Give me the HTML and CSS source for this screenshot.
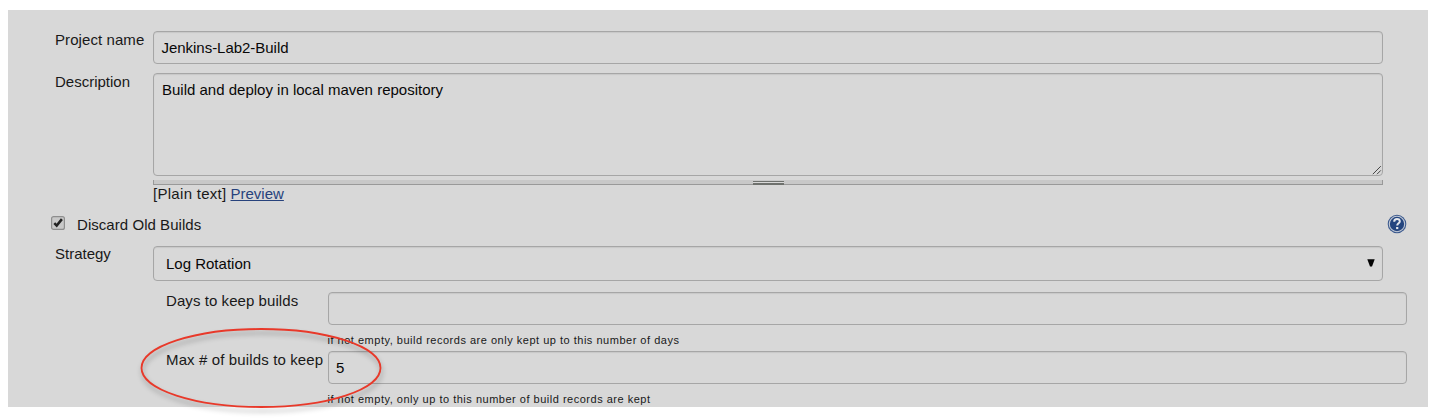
FILE: index.html
```
<!DOCTYPE html>
<html lang="en">
<head>
<meta charset="utf-8">
<title>Jenkins-Lab2-Build Config</title>
<link rel="stylesheet" href="styles.css">
</head>
<body>
<main class="panel">
  <div class="row name-row">
    <div class="label"><span class="t-name">Project name</span></div>
    <div class="field"><span class="t-value">Jenkins-Lab2-Build</span></div>
  </div>
  <div class="row desc-row">
    <div class="label"><span class="t-desc">Description</span></div>
    <div class="desc">
      <div class="field area"><span class="t-area">Build and deploy in local maven repository</span>
        <svg class="resizer" width="10" height="10" viewBox="0 0 10 10"><path d="M.8 9.2 8.8 1.2M5 9.2 8.8 5.4" stroke="#444" stroke-width="1" fill="none"/></svg>
      </div>
      <div class="handle"><span class="grip"></span></div>
      <div class="format"><span class="t-plain">[Plain text]</span> <a class="t-preview" href="#">Preview</a></div>
    </div>
  </div>
  <div class="check-row">
    <svg class="checkbox" width="14" height="14" viewBox="0 0 14 14"><rect x=".6" y=".6" width="12.8" height="12.8" rx="2" fill="#c9c9c9" stroke="#8e8e8e" stroke-width="1.2"/><path d="M3.3 7.1 5.7 9.6 10.9 3.1" stroke="#222" stroke-width="2.5" fill="none"/></svg>
    <span class="t-discard">Discard Old Builds</span>
    <svg class="help" width="20" height="20" viewBox="0 0 20 20"><circle cx="10" cy="10" r="9.3" fill="#3c5a8e"/><circle cx="10" cy="10" r="7.7" fill="#24457f" stroke="#c3cad6" stroke-width="1.1"/><path d="M7.2 7.7C7.2 5.8 8.4 5 10 5s2.8.9 2.8 2.4c0 1.9-2.6 2-2.6 4.2" stroke="#e3e6ec" stroke-width="2" fill="none"/><rect x="9.1" y="13" width="2.2" height="2.1" fill="#e3e6ec"/></svg>
  </div>
  <div class="row strategy-row">
    <div class="label"><span class="t-strategy">Strategy</span></div>
    <div class="field select"><span class="t-log">Log Rotation</span><svg class="arrow" width="8" height="8" viewBox="0 0 8 8"><path d="M.3.3H7.7L5 7.4H3Z" fill="#050505"/></svg></div>
  </div>
  <div class="row sub-row">
    <div class="label"><span class="t-days">Days to keep builds</span></div>
    <div><div class="field"></div><div class="hint t-hint1">if not empty, build records are only kept up to this number of days</div></div>
  </div>
  <div class="row sub-row">
    <div class="label"><span class="t-max">Max # of builds to keep</span></div>
    <div><div class="field"><span class="t-value">5</span></div><div class="hint t-hint2">if not empty, only up to this number of build records are kept</div></div>
  </div>
  <svg class="callout" width="260" height="100" viewBox="0 0 260 100"><ellipse cx="130" cy="50" rx="119.5" ry="39" fill="none" stroke="#e8392a" stroke-width="1.8"/></svg>
</main>
</body>
</html>
```
FILE: styles.css
```
* { box-sizing: border-box; }
body { margin: 0; min-height: 418px; padding: 10px 12px 0 8px; background: #fff; font: 15px/18px "Liberation Sans", Arial, sans-serif; color: #191919; white-space: nowrap; }
.panel { position: relative; height: 397px; padding: 21px 21px 0 47px; background: #d8d8d8; }
.row { display: grid; grid-template-columns: 98px 1230px; align-items: start; }
.field { display: flex; align-items: center; height: 33px; padding: 0 8px; border: 1px solid #a6a6a6; border-radius: 4px; box-shadow: inset 0 1px 1px #c8c8c8; color: #080808; }
.t-name { letter-spacing: .08px; }
.name-row { height: 42px; }
.t-value { margin-left: -.5px; letter-spacing: -.03px; }
.desc-row { height: 142px; }
.field.area { position: relative; height: 103px; align-items: flex-start; padding-top: 7px; }
.resizer { position: absolute; right: 0; bottom: 0; }
.handle { display: flex; justify-content: center; height: 5px; margin-top: 4px; background: #c8c8c8; border: solid #999; border-width: 0 1px 1px; }
.grip { width: 31px; height: 4px; margin-top: 1px; border: solid #6e716d; border-width: 1px 0 2px; background: #d8d8d8; }
.format { display: flex; gap: 4px; }
.t-plain { letter-spacing: .29px; }
.format a { color: #27427c; }
.check-row { display: flex; align-items: flex-start; height: 30px; margin-left: -4.5px; margin-top: 1px; }
.checkbox { margin-right: 12.5px; }
.t-discard { letter-spacing: .05px; }
.help { margin: -2px 0 0 auto; }
.strategy-row { height: 46px; }
.strategy-row .label { margin-top: -1px; }
.select { height: 35px; padding: 0 7px 0 12px; justify-content: space-between; }
.arrow { margin-bottom: 2px; }
.sub-row { grid-template-columns: 161.5px 1079.5px; margin-left: 111px; height: 59px; }
.t-days { letter-spacing: .07px; }
.t-max { letter-spacing: .13px; }
.hint { font-size: 11px; line-height: 14px; margin-top: 8px; letter-spacing: .51px; }
.callout { position: absolute; left: 123px; top: 308px; overflow: visible; filter: drop-shadow(1px 4px 2.5px rgba(0,0,0,.3)); }
```
